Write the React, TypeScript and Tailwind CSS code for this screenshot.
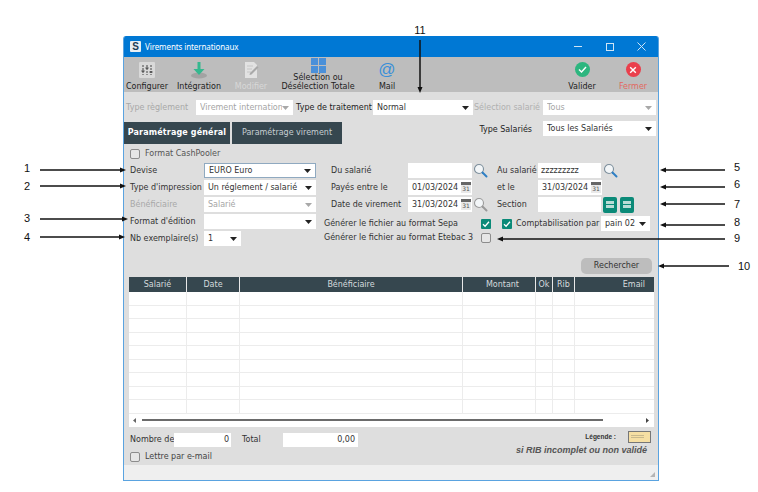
import React from "react";

const Caret = ({ off }: { off?: boolean }) => (
  <svg width="7" height="4" viewBox="0 0 7 4" className="shrink-0">
    <path d="M0 0h7L3.5 4z" fill={off ? "#a8a8a8" : "#222"} />
  </svg>
);

const Select = ({ text, w, off, className = "" }: { text?: string; w: string; off?: boolean; className?: string }) => (
  <div className={`${w} ${className} h-[15px] bg-white flex items-center pl-[4px] pr-[4px] shrink-0 overflow-hidden ${off ? "text-[#a5a5a5]" : "text-[#333]"}`}>
    <span className="flex-1 whitespace-nowrap overflow-hidden">{text}</span>
    <Caret off={off} />
  </div>
);

const Check = ({ on }: { on?: boolean }) =>
  on ? (
    <div className="w-[10px] h-[10px] rounded-[1px] bg-[#0b8a78] flex items-center justify-center shrink-0">
      <svg width="8" height="8" viewBox="0 0 8 8"><path d="M1 4.2 3.1 6.2 7 1.8" stroke="#fff" strokeWidth="1.3" fill="none" /></svg>
    </div>
  ) : (
    <div className="w-[10px] h-[10px] rounded-[2px] border border-[#8c8c8c] bg-[#e6e6e6] shrink-0" />
  );

const Search = ({ faded }: { faded?: boolean }) => (
  <svg width="15" height="15" viewBox="0 0 15 15" className="shrink-0">
    <circle cx="6" cy="6" r="4.5" fill="#f3f6f8" stroke={faded ? "#9a9a9a" : "#7d8f9c"} strokeWidth="1.1" />
    <path d="M9.5 9.5 13.5 13.5" stroke={faded ? "#9a9a9a" : "#2f7fc4"} strokeWidth="2" strokeLinecap="round" />
  </svg>
);

const DateField = ({ v }: { v: string }) => (
  <div className="w-[64px] h-[15px] bg-white flex items-center pl-[4px] text-[#333] shrink-0">
    <span className="flex-1 whitespace-nowrap">{v}</span>
    <div className="w-[10px] h-[11px] mr-[1px] flex flex-col items-center shrink-0">
      <div className="w-full h-[3px] bg-[#666]" />
      <div className="w-full h-[8px] bg-[#e9e9e9] text-[6px] leading-[8px] text-center text-[#555]">31</div>
    </div>
  </div>
);

const Tool = ({ label, w, ml, icon, off }: { label: React.ReactNode; w: string; ml: string; icon: React.ReactNode; off?: boolean }) => (
  <div className={`${w} ${ml} shrink-0 flex flex-col items-center h-[35px] text-center leading-[9px] ${off ? "text-[#d8d8d8]" : "text-[#222]"}`}>
    <div className="h-[25px] flex items-center justify-center">{icon}</div>
    <div className="whitespace-nowrap">{label}</div>
  </div>
);

const Row = ({ children }: { children: React.ReactNode }) => <div className="h-[17px] flex items-center">{children}</div>;

const cols = "grid grid-cols-[58px_53px_223px_73px_17px_22px_79px]";
const heads: [string, string][] = [
  ["Salarié", "text-center"],
  ["Date", "text-center"],
  ["Bénéficiaire", "text-center"],
  ["Montant", "text-right pr-[16px]"],
  ["Ok", "text-center"],
  ["Rib", "text-center"],
  ["Email", "text-right pr-[9px]"],
];

const Arrow = ({ x1, x2, y }: { x1: number; x2: number; y: number }) => {
  const d = x2 > x1 ? 1 : -1;
  return (
    <g>
      <line x1={x1} y1={y} x2={x2 - d * 4} y2={y} stroke="#111" strokeWidth="1.5" />
      <path d={`M${x2} ${y} l${-d * 6} -2.5 v5 z`} fill="#111" />
    </g>
  );
};

const notes: [string, number, number][] = [
  ["1", 27, 168], ["2", 27, 186], ["3", 27, 218], ["4", 27, 237],
  ["5", 737, 167], ["6", 737, 184], ["7", 737, 204], ["8", 737, 222], ["9", 737, 238], ["10", 744, 266], ["11", 420, 30],
];

export default function App() {
  return (
    <div className="relative w-[758px] h-[492px] bg-white overflow-hidden pt-[36px] pl-[123px] text-[8px] font-['DejaVu_Sans',sans-serif]">
      <div className="w-[536px] h-[445px] flex flex-col border-x border-b border-[#5aa3e0] rounded-t-[3px] overflow-hidden bg-[#efefef]">
        {/* title bar */}
        <div className="h-[21px] bg-[#0078d4] flex items-center text-white shrink-0">
          <div className="ml-[6px] w-[11px] h-[11px] bg-[#e8eef3] rounded-[1px] text-[#1c3c55] font-bold text-[10px] leading-[11px] text-center font-['Liberation_Sans',sans-serif]">S</div>
          <span className="ml-[4px] text-[8px] tracking-[-0.1px] font-['Noto_Sans',sans-serif]">Virements internationaux</span>
          <div className="ml-auto flex items-center">
            <div className="w-[8px] h-px bg-[#cfe4f5] mr-[24px]" />
            <div className="w-[8px] h-[8px] border border-[#cfe4f5] mr-[23px]" />
            <svg width="9" height="9" viewBox="0 0 9 9" className="mr-[12px]"><path d="M.5.5l8 8M8.5.5l-8 8" stroke="#cfe4f5" /></svg>
          </div>
        </div>
        {/* toolbar */}
        <div className="h-[35px] bg-[#bdbdbd] flex shrink-0">
          <Tool w="w-[46px]" ml="ml-0" label="Configurer" icon={
            <svg width="16" height="16" viewBox="0 0 16 16"><rect width="16" height="16" rx="1" fill="#d9d9d9" /><path d="M4 3v10M8 3v10M12 3v10" stroke="#444" strokeDasharray="2 1" /><path d="M2.5 9h3M6.5 6h3M10.5 10h3" stroke="#222" strokeWidth="1.2" /></svg>
          } />
          <Tool w="w-[48px]" ml="ml-[5px]" label="Intégration" icon={
            <svg width="20" height="18" viewBox="0 0 20 18"><ellipse cx="10" cy="14.5" rx="8" ry="3" fill="#a3a3a3" /><path d="M8.5 1h3v7h4l-5.500 6L4.500 8h4z" fill="#35b88f" /></svg>
          } />
          <Tool w="w-[36px]" ml="ml-[10px]" off label="Modifier" icon={
            <svg width="15" height="18" viewBox="0 0 15 18"><path d="M1 1h9l3 3v13H1z" fill="#e2e2e2" /><path d="M3 5h6M3 8h5M3 11h4" stroke="#c6c6c6" /><path d="M6 12 13 5l1.500 1.500-7 7-2 .5z" fill="#a9a9a9" /></svg>
          } />
          <div className="w-[80px] ml-[9px] shrink-0 flex flex-col items-center text-center leading-[9px] text-[#222]">
            <div className="grid grid-cols-2 gap-px w-[15px] h-[15px] mt-[1px]">
              <div className="bg-[#4a90d9]" /><div className="bg-[#4a90d9]" /><div className="bg-[#4a90d9]" /><div className="bg-[#4a90d9]" />
            </div>
            <div>Sélection ou</div>
            <div>Désélection Totale</div>
          </div>
          <Tool w="w-[30px]" ml="ml-[14px]" label="Mail" icon={
            <span className="text-[17px] leading-[18px] text-[#3a8fd8] font-['Liberation_Sans',sans-serif]">@</span>
          } />
          <Tool w="w-[40px]" ml="ml-[160px]" label="Valider" icon={
            <div className="w-[15px] h-[15px] rounded-full bg-[#2db67f] flex items-center justify-center">
              <svg width="9" height="9" viewBox="0 0 9 9"><path d="M1 4.600 3.500 7 8 2" stroke="#fff" strokeWidth="1.4" fill="none" /></svg>
            </div>
          } />
          <Tool w="w-[40px]" ml="ml-[11px]" label={<span className="text-[#e2685f]">Fermer</span>} icon={
            <div className="w-[15px] h-[15px] rounded-full bg-[#ea3f4c] flex items-center justify-center">
              <svg width="8" height="8" viewBox="0 0 8 8"><path d="M1.200 1.200l5.600 5.600M6.800 1.200 1.200 6.800" stroke="#fff" strokeWidth="1.4" /></svg>
            </div>
          } />
        </div>
        {/* form */}
        <div className="h-[373px] bg-[#dedede] flex flex-col pt-[8px] shrink-0 text-[#333]">
          <div className="h-[15px] flex items-center pl-[2px] shrink-0">
            <span className="w-[70px] whitespace-nowrap text-[#a8a8a8]">Type règlement</span>
            <Select w="w-[97px]" text="Virement international" off />
            <span className="w-[77px] ml-[3px] whitespace-nowrap text-[#222]">Type de traitement</span>
            <Select w="w-[100px]" text="Normal" />
            <span className="w-[69px] ml-px whitespace-nowrap text-[#b0b0b0]">Sélection salarié</span>
            <Select w="w-[113px]" text="Tous" off />
          </div>
          <div className="h-[22px] mt-[7px] flex shrink-0">
            <div className="w-[106px] bg-[#36474f] text-white font-bold tracking-[0.15px] flex items-center justify-center whitespace-nowrap">Paramétrage général</div>
            <div className="w-[110px] ml-[2px] bg-[#36474f] text-[#c6ced2] flex items-center justify-center whitespace-nowrap">Paramétrage virement</div>
            <div className="ml-auto mr-[2px] -mt-px flex items-start">
              <span className="mr-[11px] pt-[3px] text-[#222] whitespace-nowrap">Type Salariés</span>
              <Select w="w-[113px]" text="Tous les Salariés" />
            </div>
          </div>
          <div className="h-[13px] mt-[3px] flex items-center pl-[6px] gap-[4px] text-[#555] shrink-0">
            <Check /> <span className="ml-[1px]">Format CashPooler</span>
          </div>
          <div className="flex mt-[2px] shrink-0">
            <div className="w-[200px] pl-[6px] shrink-0">
              <Row><span className="w-[74px]">Devise</span><div className="border border-[#8fa9c0] h-[15px] w-[112px]"><Select w="w-[110px]" className="!h-[13px]" text="EURO Euro" /></div></Row>
              <Row><span className="w-[74px] whitespace-nowrap">Type d'impression</span><Select w="w-[112px]" text="Un réglement / salarié" /></Row>
              <Row><span className="w-[74px] text-[#a8a8a8]">Bénéficiaire</span><Select w="w-[112px]" text="Salarié" off /></Row>
              <Row><span className="w-[74px] whitespace-nowrap">Format d'édition</span><Select w="w-[112px]" /></Row>
              <Row><span className="w-[74px] whitespace-nowrap">Nb exemplaire(s)</span><Select w="w-[37px]" text="1" /></Row>
            </div>
            <div className="flex-1">
              <Row>
                <span className="w-[77px] ml-[7px]">Du salarié</span>
                <div className="w-[64px] h-[15px] bg-white shrink-0" />
                <div className="w-[14px] ml-px"><Search /></div>
                <span className="w-[41px] ml-[10px] whitespace-nowrap">Au salarié</span>
                <div className="w-[63px] h-[15px] bg-white pl-[3px] leading-[15px] text-[#333] shrink-0">zzzzzzzzz</div>
                <div className="ml-[2px]"><Search /></div>
              </Row>
              <Row>
                <span className="w-[77px] ml-[7px]">Payés entre le</span>
                <DateField v="01/03/2024" />
                <span className="w-[41px] ml-[25px]">et le</span>
                <div className="w-[63px]"><DateField v="31/03/2024" /></div>
              </Row>
              <Row>
                <span className="w-[77px] ml-[7px]">Date de virement</span>
                <DateField v="31/03/2024" />
                <div className="w-[14px] ml-px"><Search faded /></div>
                <span className="w-[41px] ml-[10px]">Section</span>
                <div className="w-[63px] h-[15px] bg-white shrink-0" />
                {[0, 1].map((i) => (
                  <div key={i} className="w-[14px] h-[16px] ml-[2px] mr-px rounded-[2px] bg-[#0b8a78] flex items-center justify-center shrink-0">
                    <div className="w-[8px] h-[7px] bg-[#b9dcd6] flex items-center">
                      <div className="w-full h-px bg-[#0b8a78]" />
                    </div>
                  </div>
                ))}
              </Row>
              <div className="h-[15px] mt-[3px] flex items-center">
                <span className="w-[157px] self-start mt-[3px] leading-[10px] whitespace-nowrap">Générer le fichier au format Sepa</span>
                <Check on />
                <div className="w-[11px]" />
                <Check on />
                <span className="w-[85px] ml-[4px] whitespace-nowrap">Comptabilisation par</span>
                <Select w="w-[49px]" text="pain 02" />
              </div>
              <div className="h-[13px] flex items-center">
                <span className="w-[157px] self-start mt-[2px] leading-[10px] whitespace-nowrap">Générer le fichier au format Etebac 3</span>
                <Check />
              </div>
            </div>
          </div>
          <div className="flex justify-end pr-[6px] mt-[11px] shrink-0">
            <div className="w-[71px] h-[16px] rounded-[5px] bg-[#bdbdbd] text-[#333] text-center leading-[16px]">Rechercher</div>
          </div>
          <div className="w-[525px] ml-[5px] mt-[3px] bg-white shrink-0">
            <div className={`${cols} h-[15px] bg-[#36474f] text-[#d5dadd] leading-[15px]`}>
              {heads.map(([t, c]) => (
                <div key={t} className={`${c} border-r border-[#e8e8e8] last:border-r-0`}>{t}</div>
              ))}
            </div>
            {Array.from({ length: 9 }).map((_, r) => (
              <div key={r} className={`${cols} h-[13.5px] border-b border-[#ececec]`}>
                {heads.map(([t]) => (
                  <div key={t} className="border-r border-[#ececec] last:border-r-0" />
                ))}
              </div>
            ))}
            <div className="h-[13px] flex items-center pl-[4px] pr-[5px]">
              <svg width="3" height="5" viewBox="0 0 3 5"><path d="M3 0v5L0 2.500z" fill="#666" /></svg>
              <div className="ml-[6px] w-[461px] h-[2px] bg-[#6b6b6b]" />
              <div className="flex-1" />
              <svg width="3" height="5" viewBox="0 0 3 5"><path d="M0 0v5l3-2.500z" fill="#444" /></svg>
            </div>
          </div>
          <div className="flex mt-[6px] pl-[6px] pr-[11px] shrink-0">
            <div>
              <div className="flex items-center h-[14px]">
                <span className="w-[44px] whitespace-nowrap">Nombre de</span>
                <div className="w-[57px] h-[14px] bg-white text-right pr-[2px] leading-[14px]">0</div>
                <span className="w-[41px] ml-[11px]">Total</span>
                <div className="w-[75px] h-[14px] bg-white text-right pr-[3px] leading-[14px]">0,00</div>
              </div>
              <div className="flex items-center gap-[5px] mt-[5px] h-[10px] text-[#444]">
                <Check />
                <span>Lettre par e-mail</span>
              </div>
            </div>
            <div className="ml-auto flex flex-col items-end font-['Liberation_Sans',sans-serif]">
              <div className="flex items-center -mt-[2px] text-[#333]">
                <span className="text-[6.5px] font-bold">Légende :</span>
                <div className="w-[23px] h-[12px] ml-[12px] -mr-[4px] border border-[#777] bg-[#f6dfa3] flex flex-col justify-center gap-px pl-[2px] pr-[6px]">
                  <div className="h-px bg-[#c9b98d]" />
                  <div className="h-px bg-[#c9b98d]" />
                </div>
              </div>
              <div className="mt-[2px] italic font-bold text-[9px] leading-[11px] text-[#555] whitespace-nowrap">si RIB incomplet ou non validé</div>
            </div>
          </div>
        </div>
        <div className="flex-1 flex justify-end items-end pr-[2px] pb-[2px]">
          <svg width="7" height="7" viewBox="0 0 7 7"><path d="M6 1v5H1z" fill="#b5b5b5" /></svg>
        </div>
      </div>

      {/* annotations over the picture */}
      <svg width="758" height="492" className="absolute inset-0 pointer-events-none">
        <Arrow x1={40} x2={126} y={170} />
        <Arrow x1={40} x2={126} y={186} />
        <Arrow x1={40} x2={128} y={219} />
        <Arrow x1={40} x2={125} y={237} />
        <Arrow x1={725} x2={660} y={170} />
        <Arrow x1={725} x2={660} y={187} />
        <Arrow x1={725} x2={660} y={204} />
        <Arrow x1={725} x2={660} y={225} />
        <Arrow x1={725} x2={497} y={239} />
        <Arrow x1={729} x2={658} y={266} />
        <line x1="420" y1="40" x2="420" y2="88" stroke="#111" strokeWidth="1.5" />
        <path d="M420 93l-2.500-6h5z" fill="#111" />
      </svg>
      {notes.map(([t, x, y]) => (
        <span key={t} className="absolute -translate-x-1/2 -translate-y-1/2 text-[11px] leading-none text-[#111] font-['Liberation_Sans',sans-serif]" style={{ left: x, top: y }}>{t}</span>
      ))}
    </div>
  );
}
